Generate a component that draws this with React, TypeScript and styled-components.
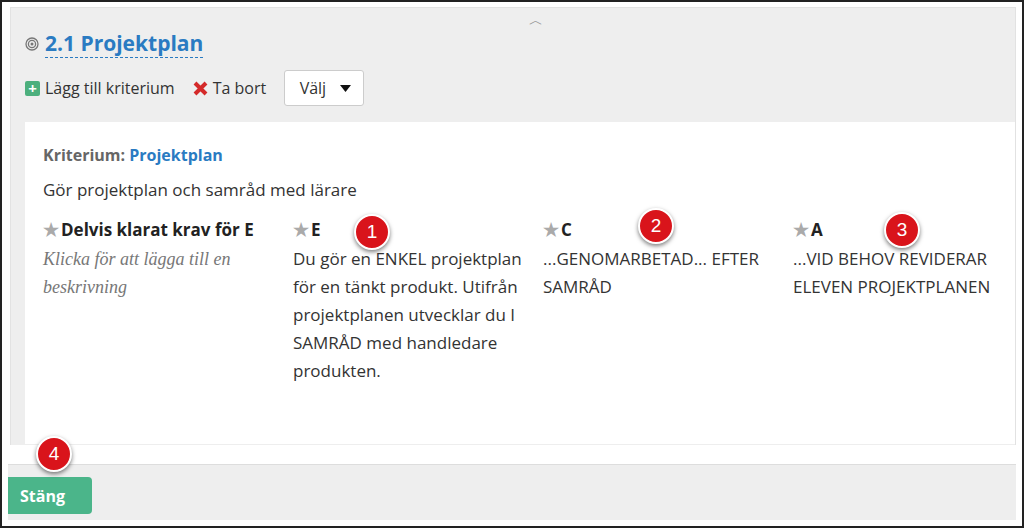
import React from "react";
import styled, { createGlobalStyle } from "styled-components";

const G = createGlobalStyle`
  html,body{margin:0;padding:0;background:#fff;}
  body{font-family:"Open Sans",sans-serif;}
`;
const Frame = styled.div`
  width:1024px;height:528px;box-sizing:border-box;border:2px solid #222;
  position:relative;overflow:hidden;background:#fff;display:flex;flex-direction:column;
`;
const Panel = styled.div`
  margin:5px 6px 0 8px;background:#eeeeee;border:1px solid #e2e2e2;border-bottom:none;
  padding:21px 0 0 14px;height:438px;box-sizing:border-box;position:relative;
`;
const Chevron = styled.div`position:absolute;left:518px;top:2px;color:#999;font-size:14px;`;
const Title = styled.div`display:flex;align-items:center;gap:6px;`;
const TitleText = styled.span`
  color:#2a7bc2;font-weight:700;font-size:21px;border-bottom:1px dashed #2a7bc2;line-height:28px;
`;
const Toolbar = styled.div`display:flex;align-items:center;margin-top:12px;font-size:16px;color:#333;`;
const Tool = styled.span`display:flex;align-items:center;gap:5px;margin-right:18px;`;
const Plus = styled.span`
  width:15px;height:15px;background:#4caf7d;border-radius:2px;color:#fff;font-weight:700;
  display:flex;align-items:center;justify-content:center;font-size:15px;line-height:1;
`;
const Select = styled.div`
  width:80px;height:36px;box-sizing:border-box;border:1px solid #ccc;border-radius:3px;background:#fff;
  display:flex;align-items:center;justify-content:flex-end;gap:14px;padding-right:12px;font-size:16px;
`;
const Card = styled.div`
  background:#fff;margin-top:16px;height:322px;box-sizing:border-box;padding:22px 0 0 18px;color:#333;
`;
const Krit = styled.div`font-size:16px;font-weight:700;color:#666;`;
const Blue = styled.span`color:#2a7bc2;`;
const Desc = styled.div`font-size:17px;margin-top:12px;color:#333;`;
const Cols = styled.div`display:grid;grid-template-columns:repeat(4,250px);margin-top:16px;`;
const Head = styled.div`font-weight:700;font-size:17px;display:flex;align-items:center;gap:2px;color:#222;`;
const Star = styled.span`color:#aaa;font-size:18px;`;
const Body = styled.div<{ $it?: boolean }>`
  font-size:17px;line-height:28px;margin-top:4px;padding-right:20px;
  ${p => p.$it ? `font-family:"Liberation Serif",serif;font-style:italic;color:#777;font-size:18px;` : `color:#333;`}
`;
const Footer = styled.div`
  margin:19px 6px 6px 6px;background:#eeeeee;flex:1;border-top:1px solid #ddd;padding-top:12px;
`;
const Btn = styled.div`
  width:84px;height:37px;background:#4bb58a;color:#fff;font-weight:700;font-size:16px;border-radius:0 4px 4px 0;
  display:flex;align-items:center;padding-left:12px;box-sizing:border-box;
`;
const Badge = styled.div<{ $x: number; $y: number }>`
  position:absolute;left:${p => p.$x}px;top:${p => p.$y}px;width:32px;height:32px;border-radius:50%;
  background:#d9141b;border:2px solid #fff;box-shadow:0 2px 4px rgba(0,0,0,.5);color:#fff;
  font-family:"Liberation Sans",sans-serif;font-size:19px;display:flex;align-items:center;justify-content:center;
`;

export default function App() {
  return (
    <Frame>
      <G />
      <Panel>
        <Chevron>︿</Chevron>
        <Title>
          <svg width="14" height="14" viewBox="0 0 14 14"><circle cx="7" cy="7" r="6" fill="none" stroke="#777" strokeWidth="1.3"/><circle cx="7" cy="7" r="3.6" fill="none" stroke="#777" strokeWidth="1.3"/><circle cx="7" cy="7" r="1.5" fill="#777"/></svg>
          <TitleText>2.1 Projektplan</TitleText>
        </Title>
        <Toolbar>
          <Tool><Plus>+</Plus>Lägg till kriterium</Tool>
          <Tool><svg width="15" height="15" viewBox="0 0 15 15"><path d="M2 2L13 13M13 2L2 13" stroke="#d42a2a" strokeWidth="4"/></svg>Ta bort</Tool>
          <Select>Välj<svg width="11" height="7" viewBox="0 0 11 7"><path d="M0 0H11L5.5 7Z" fill="#111"/></svg></Select>
        </Toolbar>
        <Card>
          <Krit>Kriterium: <Blue>Projektplan</Blue></Krit>
          <Desc>Gör projektplan och samråd med lärare</Desc>
          <Cols>
            <div><Head><Star>★</Star>Delvis klarat krav för E</Head><Body $it>Klicka för att lägga till en beskrivning</Body></div>
            <div><Head><Star>★</Star>E</Head><Body>Du gör en ENKEL projektplan för en tänkt produkt. Utifrån projektplanen utvecklar du I SAMRÅD med handledare produkten.</Body></div>
            <div><Head><Star>★</Star>C</Head><Body>...GENOMARBETAD... EFTER SAMRÅD</Body></div>
            <div><Head><Star>★</Star>A</Head><Body>...VID BEHOV REVIDERAR ELEVEN PROJEKTPLANEN</Body></div>
          </Cols>
        </Card>
      </Panel>
      <Footer><Btn>Stäng</Btn></Footer>
      <Badge $x={352} $y={212}>1</Badge>
      <Badge $x={636} $y={206}>2</Badge>
      <Badge $x={882} $y={210}>3</Badge>
      <Badge $x={34} $y={434}>4</Badge>
    </Frame>
  );
}
